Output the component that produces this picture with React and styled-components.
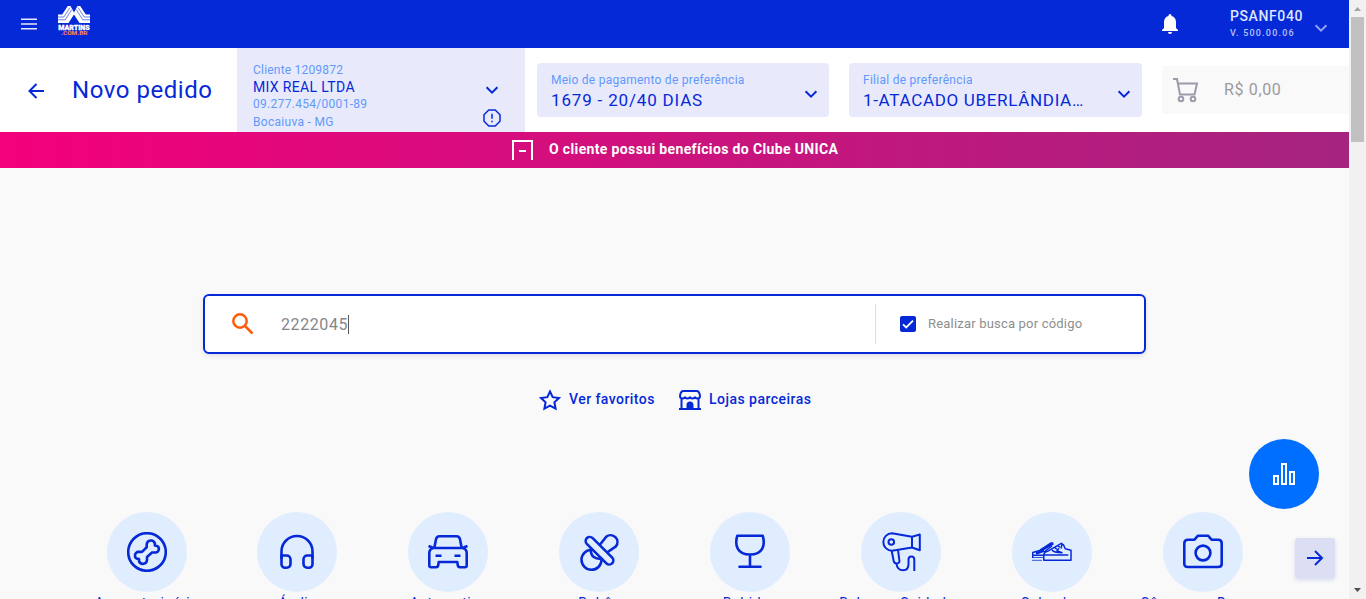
import React from "react";
import styled, { createGlobalStyle } from "styled-components";

const c = {
  blue: "#0629d8",
  light: "#e8eafb",
  sky: "#6199fb",
  page: "#f9f9f9",
};

const Global = createGlobalStyle`
  * { box-sizing: border-box; }
  html, body { margin: 0; height: 100%; overflow: hidden; }
  body { font-family: Roboto, "Liberation Sans", sans-serif; background: ${c.page}; }
  svg { display: block; flex: none; }
`;

const Window = styled.div`
  display: flex;
  height: 599px;
  overflow: hidden;
`;
const Page = styled.div`
  position: relative;
  width: 1349px;
  height: 599px;
  overflow: hidden;
  display: flex;
  flex-direction: column;
`;

const Text = styled.span`
  display: block;
  white-space: nowrap;
  font-size: ${(p) => p.$size}px;
  line-height: ${(p) => p.$line || 18}px;
  letter-spacing: ${(p) => p.$track || 0}px;
  font-weight: ${(p) => p.$weight || 400};
  color: ${(p) => p.$color || c.blue};
`;

/* Top bar */
const TopBar = styled.header`
  height: 48px;
  flex: none;
  display: flex;
  align-items: center;
  background: ${c.blue};
  padding: 0 21px;
`;
const Logo = styled.svg`
  margin-left: 20px;
  margin-top: -6px;
`;
const Bell = styled.svg`
  margin-left: auto;
`;
const User = styled.div`
  width: 84px;
  margin-left: 52px;
`;
const UserChevron = styled.svg`
  margin-top: 8px;
`;

/* Order bar */
const OrderBar = styled.section`
  height: 84px;
  flex: none;
  display: flex;
  background: #fff;
`;
const Title = styled.div`
  width: 237px;
  display: flex;
  align-items: center;
  gap: 27px;
  padding: 0 0 0 28px;
`;
const BackArrow = styled.svg`
  margin-top: 2px;
`;
const Client = styled.div`
  width: 288px;
  background: ${c.light};
  display: flex;
  justify-content: space-between;
  padding: 13px 24px 0 16px;
`;
const ClientIcons = styled.div`
  display: flex;
  flex-direction: column;
  align-items: center;
  gap: 14px;
  padding-top: 24px;
`;
const Select = styled.div`
  width: ${(p) => p.$width}px;
  height: 54px;
  margin: 15px 0 0 ${(p) => p.$gap}px;
  border-radius: 4px;
  background: ${c.light};
  display: flex;
  justify-content: space-between;
  align-items: center;
  padding: 2px 11px 0 14px;
`;
const SelectChevron = styled.svg`
  margin-top: 6px;
`;
const Cart = styled.div`
  flex: 1;
  height: 48px;
  margin: 18px 0 0 20px;
  background: ${c.page};
  display: flex;
  align-items: center;
  gap: 25px;
  padding-left: 10px;
`;

const Banner = styled.div`
  height: 36px;
  flex: none;
  display: flex;
  align-items: center;
  gap: 15px;
  padding-left: 511px;
  background: linear-gradient(90deg, #f4007c, #a5247f);
`;
const BannerText = styled(Text)`
  padding-bottom: 2px;
`;

/* Search area */
const SearchBox = styled.div`
  width: 943px;
  height: 60px;
  flex: none;
  margin: 126px 0 0 203px;
  border: 2px solid ${c.blue};
  border-radius: 6px;
  background: #fff;
  box-shadow: 0 2px 5px rgba(0, 0, 0, 0.1);
  display: flex;
  align-items: center;
`;
const SearchField = styled.div`
  width: 671px;
  height: 40px;
  border-right: 1px solid #dedede;
  display: flex;
  align-items: center;
  padding-left: 26px;
`;
const Query = styled.div`
  display: flex;
  align-items: center;
  margin-left: 26px;
  padding-top: 1px;
`;
const Caret = styled.i`
  width: 1px;
  height: 19px;
  background: #555;
`;
const Option = styled.label`
  display: flex;
  align-items: center;
  gap: 12px;
  padding-left: 24px;
`;
const Checkbox = styled.span`
  width: 16px;
  height: 16px;
  border-radius: 2px;
  background: ${c.blue};
`;
const Links = styled.nav`
  flex: none;
  display: flex;
  align-items: center;
  margin: 33px 0 0 539px;
  height: 24px;
`;
const LinkItem = styled.a`
  display: flex;
  align-items: center;
  gap: ${(p) => p.$gap}px;
  width: ${(p) => p.$width}px;
  padding-top: 1px;
`;
const LinkText = styled(Text)`
  padding-bottom: 1px;
`;

/* Categories */
const Categories = styled.div`
  flex: none;
  display: grid;
  grid-template-columns: repeat(8, 150.86px);
  margin: 101px 0 0 71.2px;
`;
const Category = styled.div`
  display: flex;
  flex-direction: column;
  align-items: center;
  gap: 1px;
`;
const Disc = styled.div`
  width: 80px;
  height: 80px;
  border-radius: 50%;
  background: #e0edff;
  display: grid;
  place-items: center;
`;
const Fab = styled.button`
  position: absolute;
  right: 30px;
  top: 439px;
  width: 70px;
  height: 70px;
  padding: 0;
  border: 0;
  border-radius: 50%;
  background: #006eff;
  display: grid;
  place-items: center;
`;
const Next = styled.button`
  position: absolute;
  right: 14px;
  top: 538px;
  width: 40px;
  height: 40px;
  padding: 0;
  border: 0;
  border-radius: 3px;
  background: #dcdff4;
  box-shadow: 0 2px 4px rgba(40, 60, 200, 0.16);
  display: grid;
  place-items: center;
`;

/* Scrollbar */
const Scrollbar = styled.div`
  width: 17px;
  background: #f1f1f1;
  display: flex;
  flex-direction: column;
  align-items: center;
  justify-content: space-between;
`;
const Thumb = styled.div`
  width: 13px;
  height: 125px;
  background: #c1c1c1;
  margin-bottom: auto;
`;

const Chevron = ({ as: As = "svg", color = c.blue, w = 2 }) => (
  <As width="14" height="10" viewBox="0 0 14 10" fill="none" stroke={color} strokeWidth={w}>
    <path d="M1.6 2.2 7 7.6l5.4-5.4" />
  </As>
);

const Martins = () => (
  <Logo width="34" height="32" viewBox="0 0 34 32">
    <path fill="#fff" d="M1 9.500h4.200L10.800 1h2.700L17 7.500 20.500 1h2.700l5.600 8.500H33V18H22.500L17 9.500 11.500 18H1z" />
    <g fill="none" stroke={c.blue} strokeWidth=".6">
      <path d="M1 12h5.800L13 2.500M1 14.800h7.200L14.800 4.500M33 12h-5.800L21 2.500M33 14.800h-7.200L19.200 4.500" />
    </g>
    <text x="1.300" y="24.500" textLength="31.400" lengthAdjust="spacingAndGlyphs" fontFamily="Roboto" fontWeight="900" fontSize="7.200" fill="#fff" stroke="#fff" strokeWidth=".3">MARTINS</text>
    <text x="4" y="30" textLength="26.500" lengthAdjust="spacingAndGlyphs" fontFamily="Roboto" fontWeight="900" fontSize="6.200" fill="#f58247">.COM.BR</text>
  </Logo>
);

const drawings = {
  bone: (
    <>
      <circle cx="20" cy="20" r="18.800" />
      <path d="M19.700 15.300V12.300a4.200 4.200 0 0 1 8.200-.8v2c2.300.1 4 1.500 4 3.500a3.600 3.600 0 0 1-3.600 3.500H25l-5 4.500v3a4.100 4.100 0 0 1-8 1v-2c-2.300-.1-4-1.500-4-3.600a3.500 3.500 0 0 1 3.600-3.500H15z" />
    </>
  ),
  phones: (
    <>
      <path d="M4.500 27v-7.500a15.500 15.500 0 0 1 31 0V27" />
      <path d="M4.500 23.500h5.200a3.800 3.800 0 0 1 3.800 3.800v4.700a3.700 3.700 0 0 1-3.700 3.700H8A3.500 3.500 0 0 1 4.500 32zM35.500 23.500h-5.200a3.800 3.800 0 0 0-3.800 3.800v4.700a3.700 3.700 0 0 0 3.700 3.700H32a3.500 3.500 0 0 0 3.500-3.700z" />
    </>
  ),
  car: (
    <>
      <path d="M6.300 16 8 7.200Q8.700 4.200 11.500 4.200h17q2.800 0 3.500 3L33.700 16" />
      <path d="M5.500 16h29q4.200 1 4.200 5v12.500q0 1.700-1.700 1.700h-5q-2 0-2.200-2l-.5-3.200H10.700l-.5 3.200q-.2 2-2.200 2H3q-1.700 0-1.700-1.700V21q0-4 4.200-5zM.5 14l4 1.500M39.500 14l-4 1.500M7.500 23.700h6M26.500 23.700h6" />
    </>
  ),
  pacifier: (
    <>
      <path d="m7.800 11.800 19.600 19.500a4 4 0 0 0 5.800-5.600L13.700 6.200a4 4 0 0 0-5.900 5.600zM20.700 13l6.500-8.300a6.900 6.900 0 0 1 9.700 9.700L28 20.500" />
      <path d="M12.300 17.800A10 10 0 1 0 22.500 28M11.800 17q-.5 10.500 11.500 9.800" />
    </>
  ),
  glass: <path d="M7.300 3.700h25.400C35.500 13 33 22.500 20 22.500S4.500 13 7.300 3.700zM20 22.500v12M9.500 34.700h21" strokeLinecap="round" />,
  dryer: (
    <g strokeWidth="2">
      <path d="M11 1.300a8.700 8.700 0 1 0 0 17.400l20-3.200V4.700zM31 4.700l7.800-2.200v15.800L31 15.500zM10.700 19l2 10q.8 3 3.600 2.500t2-3.600l-1.300-10M15.500 32c.5 4 3 6.300 6.500 6.300 4 0 5.500-2.600 5.500-6v-4.800c0-4 5.800-4 5.800 0V39" />
      <circle cx="10.300" cy="10" r="2.800" />
    </g>
  ),
  shoes: (
    <g strokeWidth="1.500">
      <path d="M11.800 22.800q.2-3 3.700-3.500L29.300 11.300l2.200 1.500 1.700 4 5.800 1.500V28.300H11.800zM11.800 23h24.500M20 18q2 2.800 10 2.700l-5-2 2-2.500M23 16l2 1M26 14l2 1.200M30 12.500l-1 4" />
      <path d="M.7 26v-5.500l7-2 11-7.500h2v2M1 23.200h10M12 20 20 14" />
      <path strokeWidth=".8" d="M1 25.500h10M0 28.300h10" />
      <path strokeWidth="2.800" d="m8.500 18.500 11.500-6.500M4 21.500l8-3" />
    </g>
  ),
  camera: (
    <>
      <path d="M5 7.700h6.500l3.500-4h10l3.500 4H35q3.700 0 3.700 3.500V32q0 3-3.700 3H5q-3.700 0-3.700-3V11.200q0-3.500 3.700-3.500z" />
      <circle cx="20" cy="21" r="7.400" />
    </>
  ),
};

const categories = [
  ["bone", "Agroveterinária", 0.6],
  ["phones", "Áudio", 0.45],
  ["car", "Automotivo", 0.5],
  ["pacifier", "Bebês", 0.65],
  ["glass", "Bebidas", 0.65],
  ["dryer", "Beleza e Cuidados", 0.5],
  ["shoes", "Calçados", 0.55],
  ["camera", "Câmeras e Drones", 0.65],
];

export default function App() {
  return (
    <Window>
      <Global />
      <Page>
        <TopBar>
          <svg width="16" height="12" viewBox="0 0 16 12" stroke="#e6eaff" strokeWidth="1.500">
            <path d="M0 1.200h16M0 6h16M0 10.800h16" />
          </svg>
          <Martins />
          <Bell width="16" height="20" viewBox="0 0 16 20" fill="#fff">
            <path d="M6.500 2V1.500a1.500 1.500 0 0 1 3 0V2c3 .7 4.500 3.200 4.500 6v6l2 2v1H0v-1l2-2V8c0-2.800 1.500-5.300 4.500-6zM6 18h4a2 2 0 0 1-4 0z" />
          </Bell>
          <User>
            <Text $size={14} $line={18} $track={0.6} $weight={500} $color="#dfe5ff">PSANF040</Text>
            <Text $size={9} $line={17} $track={1.2} $weight={500} $color="#b4c1f7">V. 500.00.06</Text>
          </User>
          <Chevron as={UserChevron} color="#93a4f3" />
        </TopBar>

        <OrderBar>
          <Title>
            <BackArrow width="17" height="16" viewBox="0 0 17 16" fill="none" stroke={c.blue} strokeWidth="2">
              <path d="M16 8H2M8.500 1 1.500 8l7 7" />
            </BackArrow>
            <Text $size={24} $line={30} $track={0.55}>Novo pedido</Text>
          </Title>
          <Client>
            <div>
              <Text $size={12} $track={0.2} $color={c.sky}>Cliente 1209872</Text>
              <Text $size={14} $line={17} $track={0.35}>MIX REAL LTDA</Text>
              <Text $size={12} $line={17} $track={0.3} $color={c.sky}>09.277.454/0001-89</Text>
              <Text $size={12} $line={18} $track={0.3} $color={c.sky}>Bocaiuva - MG</Text>
            </div>
            <ClientIcons>
              <Chevron />
              <svg width="18" height="18" viewBox="0 0 18 18" fill="none" stroke={c.blue} strokeWidth="1.500">
                <path d="M5.800 1h6.400L17 5.800v6.400L12.200 17H5.800L1 12.200V5.800zM9 4.800v5M9 11.700v1.600" />
              </svg>
            </ClientIcons>
          </Client>
          <Select $width={292} $gap={12}>
            <div>
              <Text $size={12} $track={0.25} $color={c.sky}>Meio de pagamento de preferência</Text>
              <Text $size={17} $line={22} $track={0.83}>1679 - 20/40 DIAS</Text>
            </div>
            <Chevron as={SelectChevron} />
          </Select>
          <Select $width={293} $gap={20}>
            <div>
              <Text $size={12} $track={0.27} $color={c.sky}>Filial de preferência</Text>
              <Text $size={17} $line={22} $track={0.68}>1-ATACADO UBERLÂNDIA…</Text>
            </div>
            <Chevron as={SelectChevron} />
          </Select>
          <Cart>
            <svg width="27" height="26" viewBox="0 0 27 26" fill="none" stroke="#9b9bab" strokeWidth="2">
              <path d="M1 2h4l3 15.500h14.500L25 6.500H6" />
              <circle cx="9" cy="22" r="2.300" /><circle cx="21" cy="22" r="2.300" />
            </svg>
            <Text $size={16} $track={0.65} $color="#99999f">R$ 0,00</Text>
          </Cart>
        </OrderBar>

        <Banner>
          <svg width="23" height="20" viewBox="0 0 23 20" fill="none" stroke="#fff" strokeWidth="2">
            <path d="M2 20V1h19v19M8 11h7" />
          </svg>
          <BannerText $size={14} $weight={700} $track={0.36} $color="#fff">O cliente possui benefícios do Clube UNICA</BannerText>
        </Banner>

        <SearchBox>
          <SearchField>
            <svg width="24" height="24" viewBox="0 0 24 24" fill="none" stroke="#ff5c0a" strokeWidth="2.500">
              <circle cx="9" cy="9" r="6.700" /><path d="m14 14 7.500 7.500" />
            </svg>
            <Query>
              <Text $size={16} $track={0.6} $color="#86868a">2222045</Text>
              <Caret />
            </Query>
          </SearchField>
          <Option>
            <Checkbox>
              <svg width="16" height="16" viewBox="0 0 16 16" fill="none" stroke="#fff" strokeWidth="1.800">
                <path d="m3 8.300 3.200 3.200L13 4.700" />
              </svg>
            </Checkbox>
            <Text $size={13} $track={0.19} $color="#8e8e8e">Realizar busca por código</Text>
          </Option>
        </SearchBox>

        <Links>
          <LinkItem $width={139} $gap={8}>
            <svg width="22" height="22" viewBox="0 0 22 22" fill="none" stroke={c.blue} strokeWidth="2">
              <path d="m11 2.500 2.700 5.700 6.300.8-4.600 4.300 1.200 6.300-5.600-3-5.600 3 1.200-6.300L2 9l6.300-.8z" />
            </svg>
            <LinkText $size={14} $weight={500} $track={0.45}>Ver favoritos</LinkText>
          </LinkItem>
          <LinkItem $width={140} $gap={7}>
            <svg width="24" height="22" viewBox="0 0 24 22" fill="none" stroke={c.blue} strokeWidth="2">
              <path d="M5 2h14q2.500.5 3 5 0 2.500-2.500 2.500T17 7.500q0 2-2.500 2T12 7.500q0 2-2.500 2T7 7.500q0 2-2.500 2T2 7q.5-4.500 3-5zM3.500 9v11M20.500 9v11M1 20h22" />
              <path fill={c.blue} d="M9.500 20v-4q0-2.500 2.500-2.500t2.500 2.500v4z" />
            </svg>
            <LinkText $size={14} $weight={500} $track={0.47}>Lojas parceiras</LinkText>
          </LinkItem>
        </Links>

        <Categories>
          {categories.map(([icon, name, track]) => (
            <Category key={name}>
              <Disc>
                <svg width="40" height="40" viewBox="0 0 40 40" fill="none" stroke={c.blue} strokeWidth="2.600" strokeLinejoin="round">
                  {drawings[icon]}
                </svg>
              </Disc>
              <Text $size={14} $line={20} $track={track}>{name}</Text>
            </Category>
          ))}
        </Categories>

        <Fab>
          <svg width="24" height="24" viewBox="0 0 24 24" fill="none" stroke="#fff" strokeWidth="2">
            <path d="M2 14h4v8H2zM10 2h4v20h-4zM18 10h4v12h-4z" />
          </svg>
        </Fab>
        <Next>
          <svg width="17" height="16" viewBox="0 0 17 16" fill="none" stroke={c.blue} strokeWidth="2">
            <path d="M0 8h15M8 1l7 7-7 7" />
          </svg>
        </Next>
      </Page>
      <Scrollbar>
        <svg width="17" height="17" viewBox="0 0 17 17"><path fill="#a3a3a3" d="M5 11h7L8.500 7z" /></svg>
        <Thumb />
        <svg width="17" height="17" viewBox="0 0 17 17"><path fill="#505050" d="M5 6h7l-3.500 4z" /></svg>
      </Scrollbar>
    </Window>
  );
}
